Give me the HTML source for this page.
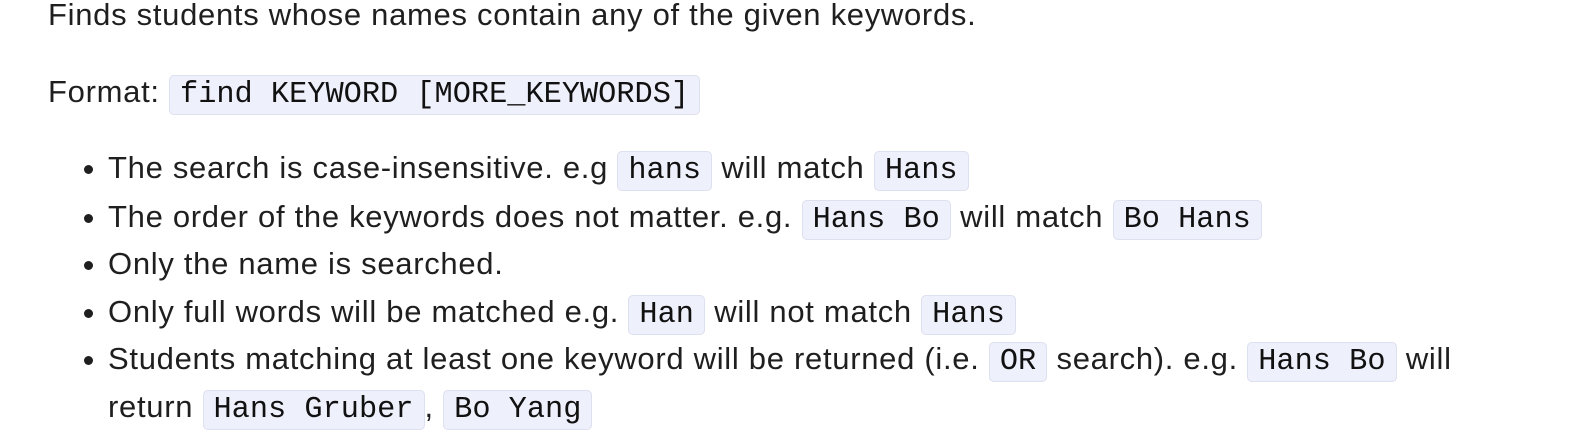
<!DOCTYPE html>
<html><head><meta charset="utf-8"><style>
body{margin:0;width:1578px;height:446px;background:#fff;overflow:hidden;font-family:"Liberation Sans",sans-serif;font-size:31px;letter-spacing:0.7px;color:#1f1f1f}
.l{position:absolute;left:48px;white-space:nowrap;line-height:40px}
.b{left:108px}
.b::before{content:"";position:absolute;left:-24px;top:17px;width:9px;height:9px;border-radius:50%;background:#1f1f1f}
code{font-family:"Liberation Mono",monospace;font-size:30.3px;letter-spacing:0;background:#eef0fb;border:1px solid #dde0ee;border-radius:5px;padding:2px 10px;color:#111}
</style></head><body>
<div class="l" style="top:-5px">Finds students whose names contain any of the given keywords.</div>
<div class="l" style="top:72px">Format: <code>find KEYWORD [MORE_KEYWORDS]</code></div>
<div class="l b" style="top:148px">The search is case-insensitive. e.g <code>hans</code> will match <code>Hans</code></div>
<div class="l b" style="top:197px">The order of the keywords does not matter. e.g. <code>Hans Bo</code> will match <code>Bo Hans</code></div>
<div class="l b" style="top:244px">Only the name is searched.</div>
<div class="l b" style="top:292px">Only full words will be matched e.g. <code>Han</code> will not match <code>Hans</code></div>
<div class="l b" style="top:339px">Students matching at least one keyword will be returned (i.e. <code>OR</code> search). e.g. <code>Hans Bo</code> will</div>
<div class="l" style="top:387px;left:108px">return <code>Hans Gruber</code>, <code>Bo Yang</code></div>
</body></html>
